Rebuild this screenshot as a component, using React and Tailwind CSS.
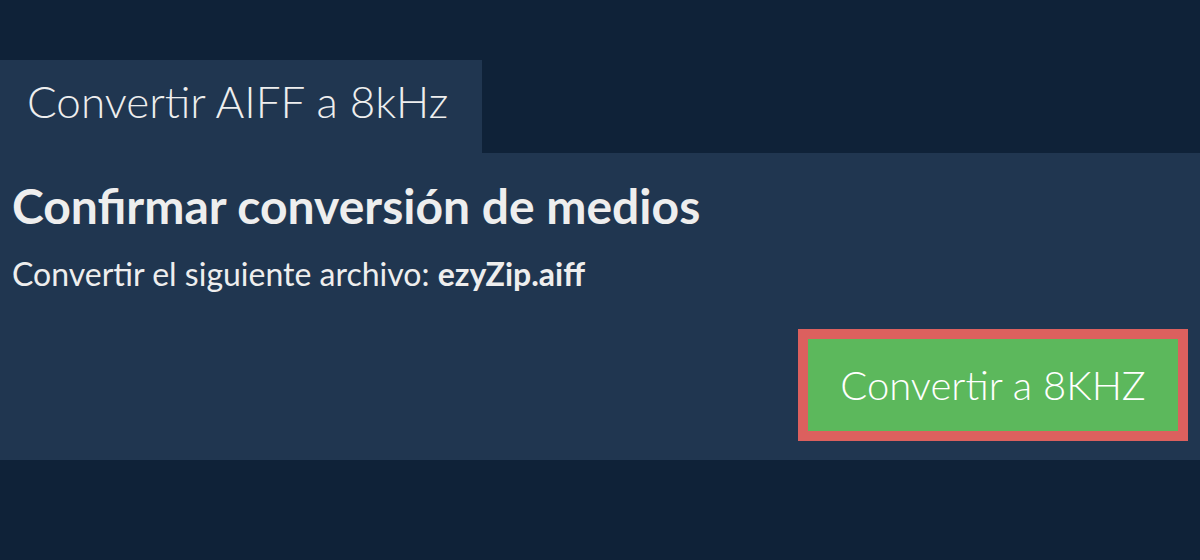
export default function App() {
  return (
    <div className="min-h-[560px] bg-[#0f2238] pt-[60px] font-['Lato','Noto_Sans',sans-serif] text-[#eeeeee]">
      <div className="flex">
        <div className="w-[482px] h-[93px] bg-[#203650] pl-[27px] flex items-center">
          <span className="text-[44px] font-light leading-none pb-[12px]">Convertir AIFF a 8kHz</span>
        </div>
      </div>
      <div className="bg-[#203650] h-[307px] px-3 pt-[25px]">
        <h1 className="text-[48px] font-bold leading-[56px]">Confirmar conversión de medios</h1>
        <p className="text-[32px] mt-[20px] leading-[40px]">
          Convertir el siguiente archivo: <b className="font-bold">ezyZip.aiff</b>
        </p>
        <div className="flex justify-end mt-[35px]">
          <button className="w-[390px] h-[112px] border-[10px] border-[#dc605e] bg-[#5cb85c] text-white text-[40px] font-light">
            Convertir a 8KHZ
          </button>
        </div>
      </div>
    </div>
  );
}
